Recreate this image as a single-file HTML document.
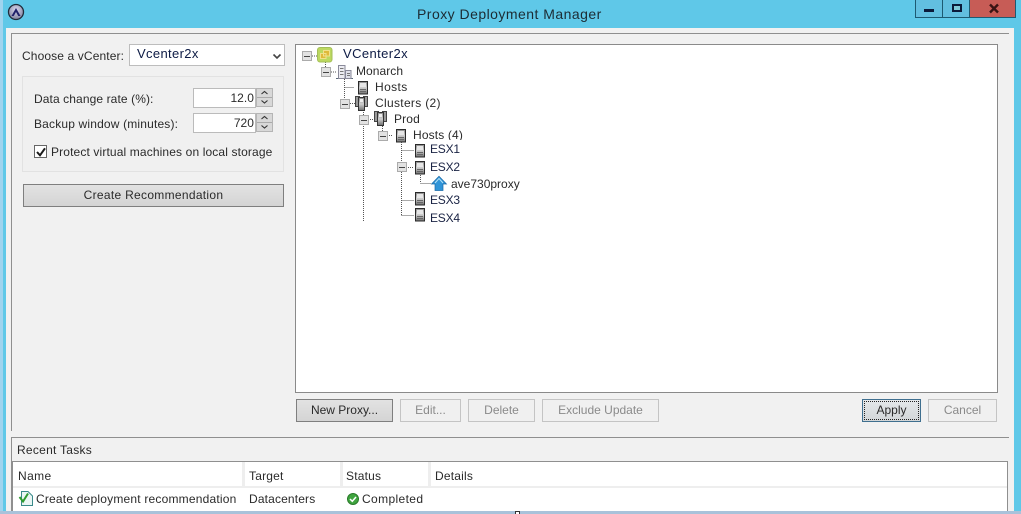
<!DOCTYPE html>
<html><head><meta charset="utf-8"><style>
html,body{margin:0;padding:0}
body{width:1021px;height:514px;overflow:hidden;position:relative;background:#5fc8e8;font-family:"Liberation Sans",sans-serif;font-size:12px;color:#2a2a2a}
.a{position:absolute;box-sizing:border-box}
.t{position:absolute;white-space:nowrap;line-height:14px;letter-spacing:.05px}
.btn{position:absolute;box-sizing:border-box;text-align:center;border:1px solid #7f7f7f;background:linear-gradient(#e2e2e2,#d4d4d4);height:23px;line-height:21px;color:#2a2a2a}
.dis{border-color:#c4c4c4;background:#f0f0f0;color:#8a8a8a}
.spin{position:absolute;box-sizing:border-box;width:17px;height:19px;background:#d8d8d8;border:1px solid #b5b5b5}
.spin:before{content:"";position:absolute;left:0;right:0;top:8px;height:1px;background:#aaa}
svg{position:absolute;overflow:visible}
.blue{color:#1a2344}
</style></head><body>
<div class="a" style="left:0;top:0;width:3px;height:514px;background:#9fd4ee"></div>
<div class="a" style="left:6px;top:28px;width:1008px;height:483px;background:#f1f1f1"></div>
<div class="a" style="left:0;top:511px;width:1021px;height:3px;background:#a9c2da"></div>
<div class="a" style="left:1014px;top:0;width:7px;height:511px;background:#5fc8e8"></div>

<!-- title bar -->
<svg style="left:7px;top:3px" width="18" height="18" viewBox="0 0 18 18"><defs><radialGradient id="g" cx=".5" cy=".35" r=".7"><stop offset="0" stop-color="#d8d8ee"/><stop offset="1" stop-color="#7a7a98"/></radialGradient></defs><circle cx="9" cy="9" r="7.500" fill="url(#g)" stroke="#1f2b3a" stroke-width="1.300"/><path d="M4.500 13 L9 5 L13.500 13 L11.300 13 L9 9 L6.700 13 Z" fill="#20206a"/></svg>
<div class="t" style="left:417px;top:6px;font-size:14px;line-height:16px;color:#1c2b33;letter-spacing:.47px">Proxy Deployment Manager</div>
<div class="a" style="left:915px;top:0;width:28px;height:18px;border:1px solid #1d5a72;border-top:0;background:#62bfe0"></div>
<div class="a" style="left:943px;top:0;width:27px;height:18px;border-bottom:1px solid #1d5a72;background:#62bfe0"></div>
<div class="a" style="left:969px;top:0;width:47px;height:18px;border:1px solid #1d5a72;border-top:0;background:#c75c56"></div>
<div class="a" style="left:924px;top:9px;width:10px;height:3px;background:#0b1a3a"></div>
<div class="a" style="left:952px;top:4px;width:10px;height:8px;border:2px solid #0b1a3a;background:#7fc8d8"></div>
<svg style="left:988px;top:4px" width="12" height="9" viewBox="0 0 12 9"><path d="M2 0.500 L10 8.500 M10 0.500 L2 8.500" stroke="#3a1414" stroke-width="2.400"/></svg>

<!-- main frame -->
<div class="a" style="left:11px;top:33px;width:998px;height:1px;background:#8f8f8f"></div>
<div class="a" style="left:11px;top:33px;width:1px;height:398px;background:#8f8f8f"></div>

<!-- left -->
<div class="t" style="left:22px;top:49px;letter-spacing:.12px">Choose a vCenter:</div>
<div class="a" style="left:129px;top:44px;width:156px;height:22px;background:#fff;border:1px solid #bdbdbd"></div>
<div class="t" style="left:137px;top:47px;font-size:13px;color:#0c1a44;letter-spacing:.35px">Vcenter2x</div>
<svg style="left:272px;top:53px" width="10" height="7" viewBox="0 0 10 7"><path d="M1.500 1.500 L5 5 L8.500 1.500" fill="none" stroke="#444" stroke-width="1.600"/></svg>

<div class="a" style="left:22px;top:76px;width:262px;height:96px;border:1px solid #e2e2e2;background:#f0f0f0"></div>
<div class="t" style="left:34px;top:92px;letter-spacing:.1px">Data change rate (%):</div>
<div class="t" style="left:34px;top:117px;letter-spacing:.17px">Backup window (minutes):</div>
<div class="a" style="left:193px;top:88px;width:63px;height:20px;background:#fff;border:1px solid #bbb"></div>
<div class="a" style="left:193px;top:113px;width:63px;height:20px;background:#fff;border:1px solid #bbb"></div>
<div class="t" style="left:193px;top:91px;width:61px;text-align:right">12.0</div>
<div class="t" style="left:193px;top:116px;width:61px;text-align:right">720</div>
<div class="spin" style="left:256px;top:88px"></div>
<div class="spin" style="left:256px;top:113px"></div>
<svg style="left:256px;top:88px" width="17" height="45" viewBox="0 0 17 45"><path d="M5.500 6 L8.500 3.500 L11.500 6 M5.500 12.500 L8.500 15 L11.500 12.500 M5.500 31 L8.500 28.500 L11.500 31 M5.500 37.500 L8.500 40 L11.500 37.500" fill="none" stroke="#333" stroke-width="1.100"/></svg>
<div class="a" style="left:34px;top:145px;width:13px;height:13px;background:#fff;border:1px solid #666"></div>
<svg style="left:35px;top:146px" width="12" height="12" viewBox="0 0 12 12"><path d="M2 6 L5 9.300 L10 2.300" fill="none" stroke="#1a1a1a" stroke-width="2"/></svg>
<div class="t" style="left:51px;top:145px;letter-spacing:.13px">Protect virtual machines on local storage</div>
<div class="btn" style="left:23px;top:184px;width:261px;letter-spacing:.3px">Create Recommendation</div>

<!-- tree box -->
<div class="a" style="left:295px;top:44px;width:703px;height:349px;background:#fff;border:1px solid #8a8a8a"></div>
<svg style="left:295px;top:40px" width="240" height="190" viewBox="0 0 240 190">
<defs>
<linearGradient id="sv" x1="0" x2="0" y1="0" y2="1"><stop offset="0" stop-color="#8a8a8a"/><stop offset=".5" stop-color="#cfcfcf"/><stop offset="1" stop-color="#6e6e6e"/></linearGradient>
<g id="s"><rect x="63.500" y="41.500" width="9" height="12.500" fill="url(#sv)" stroke="#2a2a2a"/><rect x="65" y="43" width="6" height="4" fill="#e6e6e6"/><path d="M65 49.500h6M65 51.500h6" stroke="#666"/></g>
<g id="c"><rect x="60.500" y="56.500" width="4" height="10" fill="#9a9a9a" stroke="#444"/><rect x="68.500" y="56.500" width="4" height="10" fill="#9a9a9a" stroke="#444"/><rect x="63.500" y="57.500" width="6" height="13" fill="url(#sv)" stroke="#333"/><rect x="65" y="59" width="3" height="3" fill="#eee"/></g>
</defs>
<g fill="none" stroke="#555" stroke-width="1" stroke-dasharray="1 1">
<path d="M17 16H23M30.500 22V27M36 32H42M49.500 35V58M49.500 47.500H59M55 63.500H60M68.500 68V182M73 79.500H79M87.500 84V91M92 95.500H98M106.500 100V176M106.500 110.500H119M106.500 160.500H119M106.500 175.500H119M111 127.500H119M125.500 133V143M125.500 143.500H136"/>
</g>
<g fill="#e2e2e2" stroke="#ababab">
<rect x="7.500" y="11.500" width="9" height="9"/><rect x="26.500" y="27.500" width="9" height="9"/><rect x="45.500" y="59.500" width="9" height="9"/><rect x="64.500" y="75.500" width="9" height="9"/><rect x="83.500" y="91.500" width="9" height="9"/><rect x="102.500" y="122.500" width="9" height="9"/>
</g>
<g stroke="#444"><path d="M9 16.500H15M28 32.500H34M47 64.500H53M66 80.500H72M85 96.500H91M104 127.500H110"/></g>
<!-- vcenter -->
<rect x="22.500" y="7.500" width="14.500" height="14.500" rx="2.500" fill="#bcd860" stroke="#a4bf58"/>
<path d="M28.500 10.500h6v5.500h-6zM25.500 13.500h5.500v5h-5.500z" fill="#dfb93a" stroke="#f1e18a"/>
<!-- datacenter -->
<path d="M41 38.500H58" stroke="#5a6a7a"/><rect x="43.500" y="25.500" width="6.500" height="13" fill="#ececf2" stroke="#8a8a9a"/><rect x="50.500" y="30.500" width="5.500" height="8" fill="#dfe0ea" stroke="#8a8a9a"/>
<path d="M45 28.500h3.500M45 31.500h3.500M45 34.500h3.500M52 33.500h3M52 35.500h3" stroke="#777"/>
<use href="#s"/>
<use href="#c"/>
<use href="#c" x="19" y="15"/>
<use href="#s" x="38" y="48"/>
<use href="#s" x="57" y="63"/>
<use href="#s" x="57" y="80"/>
<use href="#s" x="57" y="111"/>
<use href="#s" x="57" y="127"/>
<path d="M136.500 144L144 136.300L151.500 144H148V150.500H140V144Z" fill="#2f94d8" stroke="#1a6aa8" stroke-width=".7"/>
<path d="M140 143L144 138.500L148 143" fill="none" stroke="#b4e2f6"/>
</svg>
<div class="t" style="left:343px;top:47px;font-size:13px;color:#0c1a44;letter-spacing:.4px">VCenter2x</div>
<div class="t" style="left:356px;top:64px">Monarch</div>
<div class="t" style="left:375px;top:80px;letter-spacing:.4px">Hosts</div>
<div class="t" style="left:375px;top:96px;letter-spacing:.32px">Clusters (2)</div>
<div class="t" style="left:394px;top:112px;letter-spacing:.15px">Prod</div>
<div class="a" style="left:413px;top:128px;width:60px;height:12px;overflow:hidden"><div class="t" style="left:0;top:0;letter-spacing:.15px">Hosts (4)</div></div>
<div class="t blue" style="left:430px;top:142px;letter-spacing:-.2px">ESX1</div>
<div class="t blue" style="left:430px;top:160px;letter-spacing:-.2px">ESX2</div>
<div class="t" style="left:451px;top:177px;letter-spacing:0">ave730proxy</div>
<div class="t blue" style="left:430px;top:193px;letter-spacing:-.2px">ESX3</div>
<div class="t blue" style="left:430px;top:211px;letter-spacing:-.2px">ESX4</div>

<!-- buttons -->
<div class="btn" style="left:296px;top:399px;width:97px">New Proxy...</div>
<div class="btn dis" style="left:400px;top:399px;width:61px">Edit...</div>
<div class="btn dis" style="left:468px;top:399px;width:67px">Delete</div>
<div class="btn dis" style="left:542px;top:399px;width:117px">Exclude Update</div>
<div class="btn" style="left:862px;top:399px;width:59px;border-color:#3f6f8f;background:linear-gradient(#e4e8ea,#d2d6d8)">Apply</div>
<div class="a" style="left:864px;top:401px;width:55px;height:19px;border:1px dotted #222"></div>
<div class="btn dis" style="left:928px;top:399px;width:69px">Cancel</div>

<!-- recent tasks -->
<div class="a" style="left:11px;top:437px;width:998px;height:1px;background:#8f8f8f"></div>
<div class="a" style="left:11px;top:437px;width:1px;height:74px;background:#8f8f8f"></div>
<div class="t" style="left:17px;top:443px;letter-spacing:.27px">Recent Tasks</div>
<div class="a" style="left:12px;top:461px;width:996px;height:50px;background:#fff;border:1px solid #8f8f8f;border-bottom:0"></div>
<div class="a" style="left:13px;top:486px;width:994px;height:2px;background:#eee"></div>
<div class="a" style="left:242px;top:462px;width:3px;height:25px;background:#eee"></div>
<div class="a" style="left:340px;top:462px;width:3px;height:25px;background:#eee"></div>
<div class="a" style="left:428px;top:462px;width:3px;height:25px;background:#eee"></div>
<div class="t" style="left:18px;top:469px;letter-spacing:.4px">Name</div>
<div class="t" style="left:249px;top:469px;letter-spacing:.2px">Target</div>
<div class="t" style="left:346px;top:469px;letter-spacing:.2px">Status</div>
<div class="t" style="left:435px;top:469px;letter-spacing:.2px">Details</div>
<svg style="left:18px;top:490px" width="16" height="17" viewBox="0 0 16 17"><path d="M3.500 1.500H10L14.500 6V15.500H3.500Z" fill="#eaf6f4" stroke="#3a8a8a"/><path d="M1.500 7L5 11.500L10 3.500" fill="none" stroke="#2f9a2f" stroke-width="2"/></svg>
<div class="t" style="left:36px;top:492px;letter-spacing:.2px">Create deployment recommendation</div>
<div class="t" style="left:249px;top:492px;letter-spacing:.15px">Datacenters</div>
<svg style="left:347px;top:493px" width="12" height="12" viewBox="0 0 12 12"><circle cx="6" cy="6" r="5.500" fill="#3fa43f" stroke="#2a7a2a"/><path d="M3 6L5.300 8.300L9 4" fill="none" stroke="#fff" stroke-width="1.500"/></svg>
<div class="t" style="left:362px;top:492px;letter-spacing:.37px">Completed</div>
<div class="a" style="left:515px;top:511px;width:5px;height:3px;background:#fff;border:1px solid #333;border-bottom:0"></div>
</body></html>
